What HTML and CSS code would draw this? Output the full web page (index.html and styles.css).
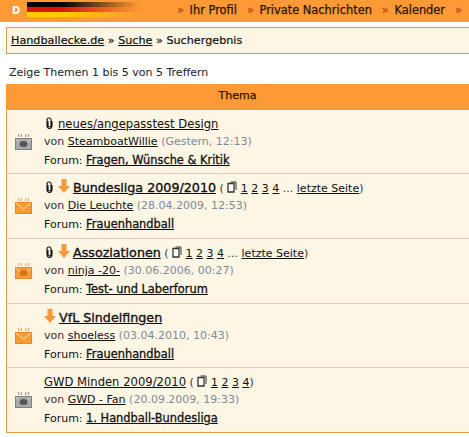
FILE: index.html
```html
<!DOCTYPE html>
<html lang="de">
<head>
    <meta charset="UTF-8">
    <title>Suchergebnis</title>
    <link rel="stylesheet" href="styles.css">
</head>
<body>
    <div class="topbar">
        <div class="logo"><span class="logo-d">D</span><span class="flag"></span></div>
        <div class="topnav">
            <span class="nav-item"><i>»</i> <a href="#">Ihr Profil</a></span>
            <span class="nav-item"><i>»</i> <a href="#">Private Nachrichten</a></span>
            <span class="nav-item"><i>»</i> <a href="#">Kalender</a></span>
            <span class="nav-item"><i>»</i></span>
        </div>
    </div>

    <div class="crumbs">
        <a href="#">Handballecke.de</a> » <a href="#">Suche</a> » Suchergebnis
    </div>

    <div class="count">Zeige Themen 1 bis 5 von 5 Treffern</div>

    <div class="results">
        <div class="thead">Thema</div>

        <div class="row short">
            <div class="status"><svg width="17" height="16" viewBox="0 0 17 16"><path d="M3 0l1 3M6 0l.5 3M11 0l-.5 3M14 0l-1 3" stroke="#8a8a8a" fill="none"/><rect x="0.500" y="4.500" width="16" height="11" fill="#a9a9a9" stroke="#808080"/><path d="M1 5l5 4.500M16 5l-5 4.500" stroke="#d6d6d6" fill="none"/><ellipse cx="8.500" cy="10" rx="4" ry="3" fill="#555"/></svg></div>
            <div class="info">
                <div class="line"><svg class="clip" width="7" height="12" viewBox="0 0 7 12"><path d="M2 4v4.500a1.500 1.500 0 0 0 3 0V3a2 2 0 0 0-4 0v6a2.500 2.500 0 0 0 5 0V4" fill="none" stroke="#111" stroke-width="1.100"/></svg><a class="title plain" href="#">neues/angepasstest Design</a></div>
                <div class="line">von <a href="#">SteamboatWillie</a> <span class="date">(Gestern, 12:13)</span></div>
                <div class="line forum">Forum: <a class="strong" href="#">Fragen, Wünsche &amp; Kritik</a></div>
            </div>
        </div>

        <div class="row">
            <div class="status"><svg width="17" height="16" viewBox="0 0 17 16"><path d="M3 0l1 3M6 0l.5 3M11 0l-.5 3M14 0l-1 3" stroke="#f0a050" fill="none"/><rect x="0.500" y="4.500" width="16" height="11" fill="#f99b35" stroke="#e8872a"/><path d="M1 5l7.500 6 7.500-6" stroke="#ffe0b8" fill="none"/></svg></div>
            <div class="info">
                <div class="line"><svg class="clip" width="7" height="12" viewBox="0 0 7 12"><path d="M2 4v4.500a1.500 1.500 0 0 0 3 0V3a2 2 0 0 0-4 0v6a2.500 2.500 0 0 0 5 0V4" fill="none" stroke="#111" stroke-width="1.100"/></svg><svg class="arrow" width="12" height="14" viewBox="0 0 12 14"><path d="M3.500 0h5v7H12l-6 7-6-7h3.500z" fill="#f79a3c"/></svg><a class="title" href="#">Bundesliga 2009/2010</a> ( <svg class="pg" width="10" height="12" viewBox="0 0 10 12"><path d="M3.500 1h5.500v8" fill="none" stroke="#333"/><path d="M1 2.500h6v8.500H1z" fill="#fff" stroke="#333" stroke-width="1.300"/></svg> <a href="#">1</a> <a href="#">2</a> <a href="#">3</a> <a href="#">4</a> ... <a href="#">letzte Seite</a>)</div>
                <div class="line">von <a href="#">Die Leuchte</a> <span class="date">(28.04.2009, 12:53)</span></div>
                <div class="line forum">Forum: <a class="strong" href="#">Frauenhandball</a></div>
            </div>
        </div>

        <div class="row">
            <div class="status"><svg width="17" height="16" viewBox="0 0 17 16"><path d="M3 0l1 3M6 0l.5 3M11 0l-.5 3M14 0l-1 3" stroke="#f0a050" fill="none"/><rect x="0.500" y="4.500" width="16" height="11" fill="#f99b35" stroke="#e8872a"/><path d="M1 5l5 4.500M16 5l-5 4.500" stroke="#ffd9a8" fill="none"/><ellipse cx="8.500" cy="10" rx="4" ry="3" fill="#d9730f"/></svg></div>
            <div class="info">
                <div class="line"><svg class="clip" width="7" height="12" viewBox="0 0 7 12"><path d="M2 4v4.500a1.500 1.500 0 0 0 3 0V3a2 2 0 0 0-4 0v6a2.500 2.500 0 0 0 5 0V4" fill="none" stroke="#111" stroke-width="1.100"/></svg><svg class="arrow" width="12" height="14" viewBox="0 0 12 14"><path d="M3.500 0h5v7H12l-6 7-6-7h3.500z" fill="#f79a3c"/></svg><a class="title" href="#">Assoziationen</a> ( <svg class="pg" width="10" height="12" viewBox="0 0 10 12"><path d="M3.500 1h5.500v8" fill="none" stroke="#333"/><path d="M1 2.500h6v8.500H1z" fill="#fff" stroke="#333" stroke-width="1.300"/></svg> <a href="#">1</a> <a href="#">2</a> <a href="#">3</a> <a href="#">4</a> ... <a href="#">letzte Seite</a>)</div>
                <div class="line">von <a href="#">ninja -20-</a> <span class="date">(30.06.2006, 00:27)</span></div>
                <div class="line forum">Forum: <a class="strong" href="#">Test- und Laberforum</a></div>
            </div>
        </div>

        <div class="row short">
            <div class="status"><svg width="17" height="16" viewBox="0 0 17 16"><path d="M3 0l1 3M6 0l.5 3M11 0l-.5 3M14 0l-1 3" stroke="#f0a050" fill="none"/><rect x="0.500" y="4.500" width="16" height="11" fill="#f99b35" stroke="#e8872a"/><path d="M1 5l7.500 6 7.500-6" stroke="#ffe0b8" fill="none"/></svg></div>
            <div class="info">
                <div class="line"><svg class="arrow" width="12" height="14" viewBox="0 0 12 14"><path d="M3.500 0h5v7H12l-6 7-6-7h3.500z" fill="#f79a3c"/></svg><a class="title" href="#">VfL Sindelfingen</a></div>
                <div class="line">von <a href="#">shoeless</a> <span class="date">(03.04.2010, 10:43)</span></div>
                <div class="line forum">Forum: <a class="strong" href="#">Frauenhandball</a></div>
            </div>
        </div>

        <div class="row">
            <div class="status"><svg width="17" height="16" viewBox="0 0 17 16"><path d="M3 0l1 3M6 0l.5 3M11 0l-.5 3M14 0l-1 3" stroke="#8a8a8a" fill="none"/><rect x="0.500" y="4.500" width="16" height="11" fill="#a9a9a9" stroke="#808080"/><path d="M1 5l5 4.500M16 5l-5 4.500" stroke="#d6d6d6" fill="none"/><ellipse cx="8.500" cy="10" rx="4" ry="3" fill="#555"/></svg></div>
            <div class="info">
                <div class="line"><a class="title plain" href="#">GWD Minden 2009/2010</a> ( <svg class="pg" width="10" height="12" viewBox="0 0 10 12"><path d="M3.500 1h5.500v8" fill="none" stroke="#333"/><path d="M1 2.500h6v8.500H1z" fill="#fff" stroke="#333" stroke-width="1.300"/></svg> <a href="#">1</a> <a href="#">2</a> <a href="#">3</a> <a href="#">4</a>)</div>
                <div class="line">von <a href="#">GWD - Fan</a> <span class="date">(20.09.2009, 19:33)</span></div>
                <div class="line forum">Forum: <a class="strong" href="#">1. Handball-Bundesliga</a></div>
            </div>
        </div>
    </div>
</body>
</html>
```

FILE: styles.css
```css
body {
    margin: 0;
    background-color: #fff;
    color: #333;
    font-family: "DejaVu Sans", Verdana, sans-serif;
    font-size: 11px;
    overflow: hidden;
}

a {
    color: #111;
    text-decoration: underline;
}

/* top bar */
.topbar {
    display: flex;
    height: 22px;
    background-color: #fd9a35;
    white-space: nowrap;
}

.logo {
    display: flex;
    align-items: center;
    padding-left: 12px;
    width: 165px;
    flex-shrink: 0;
    box-sizing: border-box;
}

.logo-d {
    width: 9px;
    color: #fff;
    font-size: 10px;
    font-weight: bold;
    line-height: 12px;
}

.flag {
    width: 113px;
    height: 15px;
    margin-left: 6px;
    margin-top: -3px;
    background: linear-gradient(90deg, rgba(253,154,53,0) 30%, #fd9a35), linear-gradient(#000 33%, #d8160c 33%, #d8160c 66%, #fc0 66%);
}

.topnav {
    display: flex;
    gap: 10px;
    padding-left: 12px;
    font-size: 11.4px;
    line-height: 20px;
}

.topnav a {
    color: #2a1500;
    text-decoration: none;
    -webkit-text-stroke: 0.25px #2a1500;
}

.topnav i {
    font-style: normal;
    color: #b5300c;
    margin-right: 2px;
}

/* breadcrumb, runs off the right edge */
.crumbs {
    margin: 5px 0 0 6px;
    padding: 0 0 0 4px;
    height: 25px;
    line-height: 25px;
    background-color: #fdf6e5;
    border: 1px solid #dc9a50;
    border-right: 0;
    font-size: 11.2px;
    color: #111;
    -webkit-text-stroke: 0.2px #111;
}

.count {
    margin: 11px 9px 4px;
    height: 15px;
    line-height: 15px;
    color: #222;
}

.results {
    margin-left: 6px;
    border-left: 1px solid #e89a45;
    border-bottom: 1px solid #e89a45;
}

.thead {
    height: 26px;
    line-height: 24px;
    margin-left: -1px;
    text-align: center;
    background-color: #fd9a35;
    color: #2a1500;
    -webkit-text-stroke: 0.25px #2a1500;
}

.row {
    display: flex;
    height: 64px;
    background-color: #fdf6e5;
    border-bottom: 1px solid #d9cdb8;
}

.row:last-child {
    border-bottom: 0;
}

.row.short {
    height: 63px;
}

.status {
    display: flex;
    align-items: center;
    justify-content: center;
    width: 32px;
    flex-shrink: 0;
}

.info {
    padding: 5px 0 0 5px;
    white-space: nowrap;
}

.line {
    height: 18px;
    line-height: 18px;
}

.forum {
    color: #111;
}

.title {
    font-size: 12.7px;
    -webkit-text-stroke: 0.35px #111;
}

.title.plain {
    font-size: 11.6px;
    -webkit-text-stroke: 0;
}

.strong {
    font-size: 11.4px;
    -webkit-text-stroke: 0.3px #111;
}

.date {
    color: #7f8a99;
}

.clip {
    vertical-align: -1px;
    margin: 0 5px 0 2px;
}

.arrow {
    vertical-align: -1px;
    margin-right: 3px;
}

.pg {
    vertical-align: -1px;
}
```
